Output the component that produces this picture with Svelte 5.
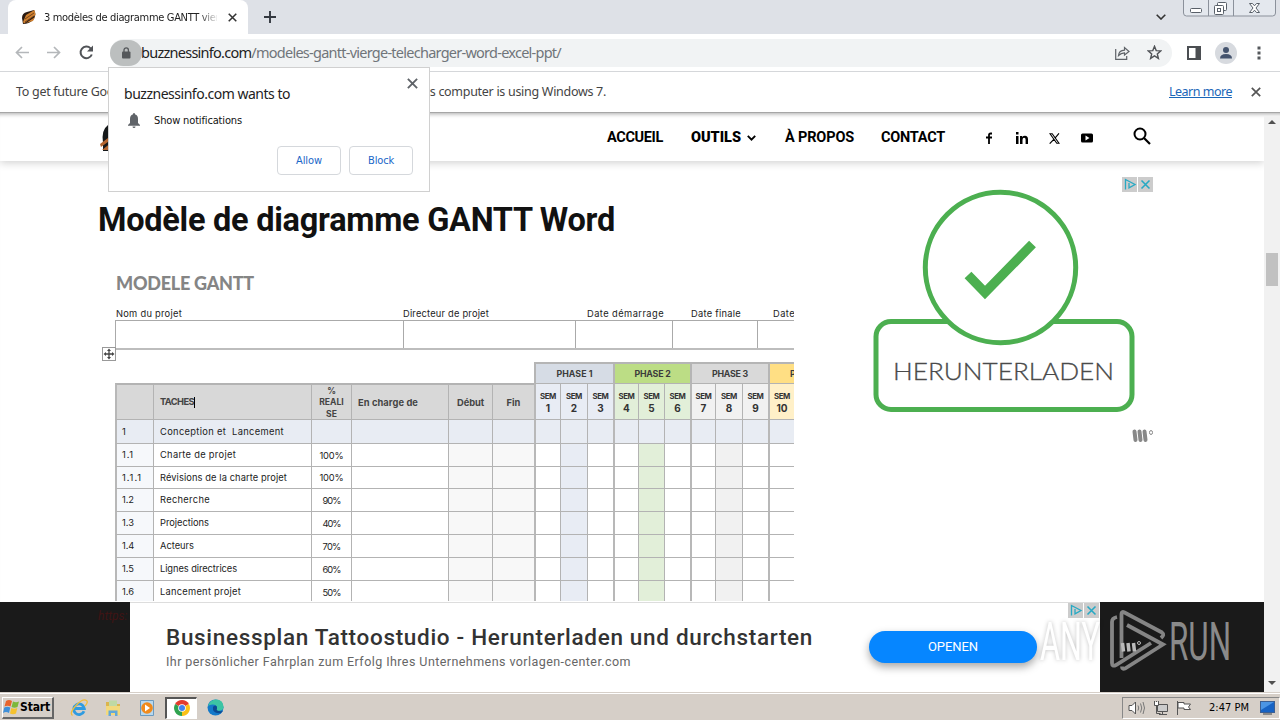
<script lang="ts">
  type Row = { id: string, task: string, done: string };

  const phases = [
    { name: 'PHASE 1', tone: 'blue', weeks: [1, 2, 3] },
    { name: 'PHASE 2', tone: 'green', weeks: [4, 5, 6] },
    { name: 'PHASE 3', tone: 'gray', weeks: [7, 8, 9] },
    { name: 'P', tone: 'yellow', weeks: [10] },
  ];

  const weeks = phases.flatMap((phase) => phase.weeks.map((n, i) => ({
    n,
    tone: phase.tone,
    first: i === 0,
    mid: i === 1,
  })));

  const rows: Row[] = [
    { id: '1.1', task: 'Charte de projet', done: '100%' },
    { id: '1.1.1', task: 'Révisions de la charte projet', done: '100%' },
    { id: '1.2', task: 'Recherche', done: '90%' },
    { id: '1.3', task: 'Projections', done: '40%' },
    { id: '1.4', task: 'Acteurs', done: '70%' },
    { id: '1.5', task: 'Lignes directrices', done: '60%' },
    { id: '1.6', task: 'Lancement projet', done: '50%' },
  ];

  const taskWidths = [76, 127, 50, 49, 34, 77, 81];

  // spreads the letters so that the text takes exactly the given width
  function fit(node: HTMLElement, width: number) {
    const length = node.textContent?.length ?? 1;
    const natural = node.getBoundingClientRect().width;
    node.style.letterSpacing = `${(width - natural) / length}px`;
  }
</script>

{#snippet adChoices()}
  <svg class="choices" width="31" height="15" viewBox="0 0 31 15">
    <path d="M0 0h15v15H0zM16 0h15v15H16z" fill="#ccc" />
    <path d="M3.500 12.500v-10l9.500 5-6 3.300V6" fill="none" stroke="#27a9c4" stroke-width="1.300" />
    <path d="M19.500 3.500l8 8m0-8l-8 8" stroke="#27a9c4" stroke-width="1.600" />
  </svg>
{/snippet}

{#snippet cross(size: number, color: string)}
  <svg width={size} height={size} viewBox="0 0 10 10">
    <path d="M.8.8l8.400 8.400M9.200.8L.8 9.200" stroke={color} stroke-width="1.700" />
  </svg>
{/snippet}

{#snippet leaf()}
  <svg width="16" height="16" viewBox="0 0 16 16">
    <path d="M1 9Q1 4 6 3L13 1Q16 6 12 11Q8 15 2 15Z" fill="#2a1a12" />
    <path d="M5 6L13.500 1 14.500 6 3 14.500 2 13zM5 14l9-6-2 4z" fill="#cf8030" />
    <path d="M4 10l9-6M4 13l9-6" stroke="#3a2010" stroke-width=".6" />
  </svg>
{/snippet}

<div class="screen">
  <div class="tabstrip">
    <div class="tab">
      {@render leaf()}
      <span class="tab-title"><span use:fit={181}>3 modèles de diagramme GANTT vierg</span></span>
      {@render cross(9, '#333')}
    </div>
    <svg class="plus" width="12" height="12" viewBox="0 0 12 12"><path d="M6 0v12M0 6h12" stroke="#333840" stroke-width="1.900" /></svg>
    <svg class="chevron" width="10" height="6" viewBox="0 0 10 6"><path d="M.7.7L5 5 9.300.7" fill="none" stroke="#333" stroke-width="1.600" /></svg>
    <svg class="window-buttons" width="94" height="17" viewBox="0 0 94 17">
      <path d="M.5 0v13q0 3 3 3h86q3 0 3-3V0M25.500 0v16M50.500 0v16" fill="#e4e8ee" stroke="#8b919b" />
      <rect x="7.500" y="8.500" width="11" height="4" rx="1" fill="#fff" stroke="#596069" />
      <rect x="34.500" y="2.500" width="9" height="8" rx="1" fill="#fff" stroke="#596069" />
      <rect x="31.500" y="5.500" width="9" height="9" rx="1" fill="#fff" stroke="#596069" />
      <rect x="34.500" y="8.500" width="3" height="3" fill="none" stroke="#596069" />
      <path d="M66.500 3.500h3l2 2.300 2-2.300h3l-3.500 4.500 3.500 4.500h-3l-2-2.300-2 2.300h-3l3.500-4.500z" fill="#fff" stroke="#596069" />
    </svg>
  </div>

  <div class="toolbar">
    <svg class="nav-icon" width="14" height="13" viewBox="0 0 14 13"><path d="M14 6.500H1.500M7 1L1.500 6.500 7 12" fill="none" stroke="#b4b7ba" stroke-width="1.700" /></svg>
    <svg class="nav-icon" width="14" height="13" viewBox="0 0 14 13"><path d="M0 6.500h12.500M7 1l5.500 5.500L7 12" fill="none" stroke="#b4b7ba" stroke-width="1.700" /></svg>
    <svg class="nav-icon" width="15" height="15" viewBox="0 0 15 15">
      <path d="M12.800 9.500A5.800 5.800 0 1 1 11.600 3.400L13 5" fill="none" stroke="#505357" stroke-width="2" />
      <path d="M14 .5v6H8z" fill="#505357" />
    </svg>
    <div class="address">
      <div class="lock">
        <svg width="10" height="12" viewBox="0 0 10 12">
          <rect x="1" y="4.500" width="8.500" height="7" rx="1" fill="#55585b" />
          <path d="M3 5V3a2.200 2.200 0 0 1 4.400 0v2" fill="none" stroke="#55585b" stroke-width="1.300" />
        </svg>
      </div>
      <span class="url" use:fit={420}>buzznessinfo.com<i>/modeles-gantt-vierge-telecharger-word-excel-ppt/</i></span>
      <svg class="share" width="15" height="14" viewBox="0 0 15 14">
        <path d="M.7 3v10.300h11V10" fill="none" stroke="#5f6368" stroke-width="1.200" />
        <path d="M3.500 9.500q.5-5 6-5.300V1.500L14 5.500 9.500 9V6.800q-3.500 0-6 2.700z" fill="none" stroke="#5f6368" stroke-width="1.200" />
      </svg>
      <svg width="15" height="15" viewBox="0 0 15 15"><path d="M7.500 1.300l1.700 4.300 4.600.3-3.500 3 1.100 4.500-3.900-2.500-3.900 2.500 1.100-4.500-3.500-3 4.600-.3z" fill="none" stroke="#505357" stroke-width="1.400" /></svg>
    </div>
    <svg width="14" height="14" viewBox="0 0 14 14"><path d="M1 1h12v12H1z" fill="none" stroke="#4b4e52" stroke-width="2" /><path d="M8.500 1H13v12H8.500z" fill="#4b4e52" /></svg>
    <svg class="avatar" width="22" height="22" viewBox="0 0 22 22">
      <circle cx="11" cy="11" r="11" fill="#d7dadf" />
      <circle cx="11" cy="8" r="3" fill="#45546e" />
      <path d="M5 16.500q0-4.500 6-4.500t6 4.500z" fill="#45546e" />
    </svg>
    <svg class="dots" width="4" height="14" viewBox="0 0 4 14"><path d="M.5.500h3v3h-3zM.5 5.500h3v3h-3zM.5 10.500h3v3h-3z" fill="#55585c" /></svg>
  </div>

  <div class="infobar">
    <span use:fit={590}>To get future Google Chrome updates, you'll need Windows 10 or later. This computer is using Windows 7.</span>
    <a href="#learn" use:fit={63}>Learn more</a>
    {@render cross(10, '#555')}
  </div>

  <div class="viewport">
    <div class="page">
      <header>
        <div class="brand">
          <svg width="24" height="28" viewBox="0 0 24 28"><path d="M3 19Q1 6 8 1l14 5-6 21H3z" fill="#15181a" /><path d="M0 20l12-9v4L1 23zM2 26l10-8v8z" fill="#b5652f" /></svg>
        </div>
        <nav>
          <span use:fit={56}>ACCUEIL</span>
          <span class="menu"><b use:fit={50}>OUTILS</b><svg width="9" height="6" viewBox="0 0 9 6"><path d="M.8.8l3.700 3.800L8.200.8" fill="none" stroke="#000" stroke-width="1.900" /></svg></span>
          <span class="about" use:fit={69}>À PROPOS</span>
          <span use:fit={64}>CONTACT</span>
        </nav>
        <div class="social">
          <svg width="8" height="12" viewBox="0 0 8 12"><path d="M7 1.500H5.500Q4 1.500 4 3V12M1 5.500h6" fill="none" stroke="#000" stroke-width="1.800" /></svg>
          <svg width="12" height="12" viewBox="0 0 12 12"><path d="M0 4h2.500v8H0zM0 0h2.500v2.500H0zM4 4h2.300v1.200Q7 3.800 9 3.800q3 0 3 3.500V12H9.600V7.800q0-2-1.500-2T6.500 8v4H4z" /></svg>
          <svg width="11" height="11" viewBox="0 0 11 11"><path d="M1 .7h2.200l6.800 9.600H7.800zM10 .3L6.200 4.800M4.800 6.300L.7 10.700" fill="none" stroke="#000" stroke-width="1.100" /></svg>
          <svg width="12" height="10" viewBox="0 0 12 10"><rect y="0.500" width="12" height="9" rx="1.500" /><path d="M4.500 2.500v5l4-2.500z" fill="#fff" /></svg>
        </div>
        <svg class="search" width="18" height="18" viewBox="0 0 18 18"><circle cx="7" cy="7" r="5.500" fill="none" stroke="#000" stroke-width="2" /><path d="M11 11l6 6" stroke="#000" stroke-width="2.200" /></svg>
      </header>

      <main>
        <article>
          <h2><span use:fit={517}>Modèle de diagramme GANTT Word</span></h2>
          <div class="sheet">
            <h3><span use:fit={138}>MODELE GANTT</span></h3>
            <div class="fields">
              <div class="field"><span use:fit={66}>Nom du projet</span></div>
              <div class="field"><span use:fit={86}>Directeur de projet</span></div>
              <div class="field pad"><span use:fit={77}>Date démarrage</span></div>
              <div class="field wide"><span use:fit={50}>Date finale</span></div>
              <div class="field last"><span use:fit={22}>Date</span></div>
            </div>
            <div class="handle">
              <svg width="14" height="14" viewBox="0 0 14 14">
                <rect x=".5" y=".5" width="13" height="13" fill="#fff" stroke="#999" />
                <path d="M7 3v8M3 7h8" stroke="#444" stroke-width="1.300" />
                <path d="M7 1.500l2 2.500H5zM7 12.500L5 10h4zM1.500 7L4 5v4zM12.500 7L10 9V5z" fill="#444" />
              </svg>
            </div>
            <div class="phases">
              {#each phases as phase}
                <div class="phase {phase.tone}">
                  {#if phase.name === 'P'}P{:else}<span use:fit={36}>{phase.name}</span>{/if}
                </div>
              {/each}
            </div>
            <div class="gantt">
              <div class="cell head edge"></div>
              <div class="cell head task"><span use:fit={34}>TACHES</span><span class="caret"></span></div>
              <div class="cell head done">%<br>REALI<br>SE</div>
              <div class="cell head owner"><span use:fit={60}>En charge de</span></div>
              <div class="cell head date"><span use:fit={27}>Début</span></div>
              <div class="cell head date">Fin</div>
              {#each weeks as week}
                <div class="cell week {week.tone}" class:edge={week.first}><small use:fit={16}>SEM</small>{week.n}</div>
              {/each}

              <div class="cell group edge id">1</div>
              <div class="cell group task"><span use:fit={124}>Conception et &nbsp;Lancement</span></div>
              {#each Array(4) as _}
                <div class="cell group"></div>
              {/each}
              {#each weeks as week}
                <div class="cell group" class:edge={week.first}></div>
              {/each}

              {#each rows as row, i}
                <div class="cell edge id"><span use:fit={row.id.length * 4}>{row.id}</span></div>
                <div class="cell task"><span use:fit={taskWidths[i]}>{row.task}</span></div>
                <div class="cell done"><span use:fit={row.done.length * 6}>{row.done}</span></div>
                <div class="cell"></div>
                <div class="cell dim"></div>
                <div class="cell dim"></div>
                {#each weeks as week}
                  <div class="cell {week.mid ? week.tone : ''}" class:edge={week.first}></div>
                {/each}
              {/each}
            </div>
          </div>
        </article>

        <aside>
          {@render adChoices()}
          <svg class="download" width="300" height="275" viewBox="860 175 300 275">
            <rect x="876" y="321.500" width="256" height="88" rx="15" fill="#fff" stroke="#4caf50" stroke-width="5" />
            <circle cx="1000.500" cy="267.500" r="75.200" fill="#fff" stroke="#4caf50" stroke-width="5" />
            <path d="M968 275l17 17.500 47.500-48.500" fill="none" stroke="#4caf50" stroke-width="9.500" />
            <text x="893" y="380" textLength="221" lengthAdjust="spacingAndGlyphs">HERUNTERLADEN</text>
            <path d="M1134.500 431.500l1 8.500M1139.500 431.500l1 8.500M1144.500 431.500l1 8.500" stroke="#888" stroke-width="4" stroke-linecap="round" />
            <ellipse cx="1151" cy="432.500" rx="1.500" ry="2" fill="none" stroke="#888" />
          </svg>
        </aside>
      </main>

      <div class="sticky">
        <span class="source">https:</span>
        <div class="banner">
          <div class="copy">
            <strong><span use:fit={647}>Businessplan Tattoostudio - Herunterladen und durchstarten</span></strong>
            <p><span use:fit={465}>Ihr persönlicher Fahrplan zum Erfolg Ihres Unternehmens vorlagen-center.com</span></p>
          </div>
          <div class="open"><span use:fit={50}>OPENEN</span></div>
          {@render adChoices()}
        </div>
      </div>
    </div>

    <div class="scrollbar">
      <svg width="8" height="4" viewBox="0 0 8 4"><path d="M4 0l4 4H0z" fill="#505050" /></svg>
      <div class="thumb"></div>
      <svg class="down" width="8" height="4" viewBox="0 0 8 4"><path d="M4 4L0 0h8z" fill="#505050" /></svg>
    </div>
  </div>

  <div class="taskbar">
    <div class="start">
      <svg width="17" height="16" viewBox="0 0 17 16">
        <path d="M3 2q3-2 6 0L7.500 7.500q-3-1.500-6 0z" fill="#e8642c" />
        <path d="M10 2.500q3 1.500 6 0L14.500 8q-3 1.500-6 0z" fill="#7db83c" />
        <path d="M1.300 8.500q3-1.500 6 0L6 14q-3-2-6 0z" fill="#3f8fd8" />
        <path d="M8.300 9q3 1.500 6 0L13 14.500q-3 1.500-6 0z" fill="#f5c22f" />
      </svg>
      <span use:fit={30}>Start</span>
    </div>
    <div class="app">
      <svg width="18" height="18" viewBox="0 0 18 18">
        <path d="M14 12.200A5.300 5.300 0 1 1 14.300 9.500H5" fill="none" stroke="#2f9be0" stroke-width="2.800" />
        <path d="M2.500 16.500Q-1 14 6 6.500T16.500 1.500Q18.500 3 15 7" fill="none" stroke="#f0bd3a" stroke-width="1.300" />
      </svg>
    </div>
    <div class="app">
      <svg width="18" height="18" viewBox="0 0 18 18">
        <path d="M2 3h5l1 2h8v11H2z" fill="#dbb54e" />
        <path d="M5 1.500h8V8H5z" fill="#bfd9a4" />
        <path d="M2 7h14v9H2z" fill="#f3d97c" />
        <path d="M4.500 17v-5.500h9V17h-2.500v-3H7v3z" fill="#62a8d8" />
      </svg>
    </div>
    <div class="app">
      <svg width="18" height="18" viewBox="0 0 18 18">
        <path d="M2.500 1.500h13v15h-13z" fill="#b8d8ee" stroke="#6a9ac0" />
        <circle cx="9" cy="9" r="5.800" fill="#f08a1c" />
        <path d="M7 5.500v7l5-3.500z" fill="#fff" />
      </svg>
    </div>
    <div class="app active">
      <svg width="16" height="16" viewBox="0 0 16 16">
        <path d="M8 8L1.100 4A8 8 0 0 1 14.900 4z" fill="#e33b2e" />
        <path d="M8 8l6.900-4A8 8 0 0 1 8 16z" fill="#fbc116" />
        <path d="M8 8v8A8 8 0 0 1 1.100 4z" fill="#30a350" />
        <circle cx="8" cy="8" r="3.800" fill="#fff" />
        <circle cx="8" cy="8" r="3" fill="#4182ee" />
      </svg>
    </div>
    <div class="app">
      <svg width="17" height="17" viewBox="0 0 17 17">
        <circle cx="8.500" cy="8.500" r="8" fill="#1479c9" />
        <path d="M1 7Q3 .5 9 .5q7 0 7.500 7 0 4-4.500 4-3 0-2-2 0-4-4.500-4Q2.500 5.500 1 7z" fill="#3cc5a4" />
        <path d="M6 8q-1 7 8 6l2-2q-7 1-6-3 .5-2-1.500-2.500Q6.500 6.500 6 8z" fill="#0c4a92" />
        <path d="M10 9.500q1-2-.5-3.500l7 2q-.5 3.500-4.500 3.500-3 0-2-2z" fill="#3cc5a4" />
      </svg>
    </div>
    <div class="tray">
      <svg width="18" height="16" viewBox="0 0 18 16"><path d="M1 5.500h3L7.500 2v12L4 10.500H1z" fill="#fff" stroke="#555" /><path d="M10 5.500q1.500 2.500 0 5M12.500 3.500q2.500 4.500 0 9M15 2q3 6 0 12" fill="none" stroke="#777" /></svg>
      <svg width="16" height="16" viewBox="0 0 16 16"><path d="M4.500 4.500h10v7h-10z" fill="#ccc" stroke="#555" /><path d="M6 14.500h8M9.500 12v2" stroke="#555" /><path d="M1.500 1v4.500h4V1M3.500 1v12.500h4" fill="none" stroke="#555" /><path d="M2 2h3v3H2z" fill="#fff" /></svg>
      <svg width="16" height="16" viewBox="0 0 16 16"><path d="M1.500 1v14M2 2.500h6v1.500h6.500l-2 3 2 2.500H8V8H2z" fill="#fff" stroke="#555" /></svg>
      <span class="clock" use:fit={40}>2:47 PM</span>
      <svg class="desktop" width="15" height="14" viewBox="0 0 15 14"><rect x=".5" y=".5" width="14" height="11" fill="#1763c4" stroke="#3b5f93" /><path d="M1 1h13L1 9z" fill="#4b95e4" /><path d="M3 13h9" stroke="#888" stroke-width="2" /></svg>
    </div>
  </div>

  <div class="popup">
    <div class="popup-close">{@render cross(11, '#5f6368')}</div>
    <div class="popup-title"><span use:fit={166}>buzznessinfo.com wants to</span></div>
    <div class="permission">
      <svg width="12" height="15" viewBox="0 0 12 15"><path d="M6 0q1.200 0 1.200 1.500Q10 2.300 10 6v4l2 2v.8H0V12l2-2V6q0-3.700 2.800-4.500Q4.800 0 6 0zM4.500 13.500h3q0 1.500-1.500 1.500t-1.500-1.500z" fill="#5f6368" /></svg>
      <span use:fit={88}>Show notifications</span>
    </div>
    <div class="actions">
      <button><span use:fit={26}>Allow</span></button>
      <button><span use:fit={26}>Block</span></button>
    </div>
  </div>

  <svg class="watermark" width="200" height="70" viewBox="1036 605 200 70">
    <g class="word">
      <text x="1040" y="660" textLength="60" lengthAdjust="spacingAndGlyphs" class="ghost">ANY</text>
      <text x="1169" y="660" textLength="62" lengthAdjust="spacingAndGlyphs" fill="#8a8a8a">RUN</text>
    </g>
    <g fill="none" stroke="#858585" stroke-width="3.800">
      <path d="M1121.500 658V614q0-3 3-1.500l37.500 20q3 2-1 5.500" />
      <path d="M1127 625l36 19.500-38 24q-3 1-3-2" />
      <path d="M1117 617q-5 1-5 5v41q0 4 4 2l35-22" />
    </g>
    <path d="M1122.500 643l1 8.500M1128 643l1 8.500M1133.500 643l1 8.500" stroke="#bbb" stroke-width="3.500" />
    <circle cx="1139" cy="643" r="1.500" fill="none" stroke="#bbb" />
  </svg>
</div>

<style>
  :global(body) {
    overflow: hidden;
    margin:   0;
  }

  .screen {
    position:       relative;
    display:        flex;
    flex-direction: column;
    width:          1280px;
    height:         720px;
    overflow:       hidden;
    background:     #fff;
    font-family:    "DejaVu Sans Condensed", "DejaVu Sans", sans-serif;
    font-size:      11px;
    color:          #222;
  }

  .screen * {
    box-sizing: border-box;
  }

  svg {
    display:     block;
    flex-shrink: 0;
  }

  span {
    white-space: nowrap;
  }

  .tabstrip {
    display:     flex;
    align-items: center;
    height:      34px;
    background:  #dee1e7;
  }

  .tab {
    display:       flex;
    align-items:   center;
    width:         240px;
    height:        34px;
    margin-left:   8px;
    padding-left:  13px;
    border-radius: 8px 8px 0 0;
    background:    #fff;
  }

  .tab-title {
    width:        173px;
    margin:       0 11px 0 7px;
    overflow:     hidden;
    font-size:    11px;
    mask-image:   linear-gradient(90deg, #000 155px, transparent 175px);
  }

  .plus {
    margin-left: 16px;
  }

  .chevron {
    margin-left: 880px;
  }

  .window-buttons {
    align-self:  flex-start;
    margin-left: 17px;
  }

  .toolbar {
    display:       flex;
    align-items:   center;
    height:        38px;
    padding-left:  15px;
    border-bottom: 1px solid #d5d7da;
  }

  .nav-icon {
    margin-right: 18px;
  }

  .address {
    display:       flex;
    align-items:   center;
    width:         1062px;
    height:        28px;
    margin:        0 15px 0 -2px;
    border-radius: 14px;
    background:    #f1f3f4;
  }

  .lock {
    display:         flex;
    align-items:     center;
    justify-content: center;
    width:           32px;
    height:          26px;
    border-radius:   13px;
    background:      #bcbfbf;
  }

  .url {
    margin: 0 0 2px -1px;
    font:   14.5px/20px "Noto Sans", sans-serif;
    color:  #222;
  }

  .url i {
    font-style: normal;
    color:      #70757a;
  }

  .share {
    margin: 0 17px 0 auto;
  }

  .share + svg {
    margin-right: 10px;
  }

  .avatar {
    margin-left: 14px;
  }

  .dots {
    margin-left: 20px;
  }

  .infobar {
    display:       flex;
    align-items:   center;
    height:        40px;
    padding:       0 0 1px 16px;
    font:          12.5px "Noto Sans", sans-serif;
    color:         #444;
  }

  .infobar a {
    margin: 0 19px 0 auto;
    color:  #1a66b8;
  }

  .infobar > :global(svg) {
    margin-right: 19px;
  }

  .viewport {
    display:    flex;
    height:     580px;
    border-top: 1px solid #a6a6a6;
    box-shadow: inset 0 5px 4px -4px #aaa;
  }

  .page {
    position: relative;
    width:    1264px;
    overflow: hidden;
  }

  header {
    display:      flex;
    align-items:  center;
    height:       48px;
    padding-left: 100px;
    box-shadow:   0 2px 8px rgba(0, 0, 0, 0.18);
  }

  .brand {
    width:       507px;
    padding-top: 2px;
  }

  nav {
    display:     flex;
    gap:         28px;
    width:       377px;
    padding-top: 1px;
    font:        bold 14.5px Roboto, sans-serif;
    color:       #000;
  }

  .menu {
    display:     flex;
    align-items: center;
    gap:         6px;
  }

  .about {
    margin-left: 1px;
    margin-right: -1px;
  }

  .social {
    display:     flex;
    align-items: center;
    gap:         21px;
    width:       149px;
    padding-top: 2px;
  }

  .social svg:first-child {
    margin: 0 2px 0 1px;
  }

  .search {
    margin-top: -3px;
  }

  main {
    display: flex;
  }

  article {
    width:        794px;
    padding-left: 98px;
  }

  h2 {
    height:      70px;
    margin:      40px 0 0;
    font:        bold 32.5px/39px Roboto, sans-serif;
    color:       #111;
  }

  .sheet {
    width:        696px;
    height:       330px;
    padding-left: 17px;
    overflow:     hidden;
    font:         9.3px/12px Inter, sans-serif;
  }

  .sheet h3 {
    height:  36px;
    margin:  0 0 0 1px;
    font:    900 18px/25px Lato, sans-serif;
    color:   #858585;
  }

  .fields {
    display:               grid;
    grid-template-columns: 288px 172px 97px 85px 60px;
    height:                43px;
    border-bottom:         2px solid #bdbdbd;
  }

  .field {
    display:        flex;
    flex-direction: column;
    align-items:    flex-start;
    line-height:    13px;
  }

  .field::after {
    content:      "";
    width:        100%;
    flex:         1;
    border-top:   1px solid #aaa;
    border-left:  1px solid #aaa;
  }

  .field:first-child span {
    margin-left: 1px;
  }

  .pad span {
    margin-left: 12px;
  }

  .wide span {
    margin-left: 19px;
  }

  .last span {
    margin-left: 16px;
  }

  .handle {
    height:      13px;
    margin-left: -13px;
    margin-top:  -3px;
  }

  .phases {
    display:               grid;
    grid-template-columns: 79px 77px 78px 78px;
    height:                21px;
    margin-left:           419px;
    margin-top:            2px;
  }

  .phase {
    padding:      4px 0 0;
    border-top:   2px solid #b5b5b5;
    border-left:  2px solid #b5b5b5;
    font-size:    8.8px;
    font-weight:  700;
    text-align:   center;
    color:        #3c3c3c;
  }

  .phase.blue { background: #d6dce5; }
  .phase.green { background: #bcdd85; }
  .phase.gray { background: #d9d9d9; }
  .phase.yellow { padding-left: 20px; background: #ffdf84; text-align: left; }

  .gantt {
    display:               grid;
    grid-template-columns: 38px 158px 40px 97px 44px 42px 26px 27px 26px 25px 26px 26px 25px 27px 26px 26px;
    grid-template-rows:    36px 24px 23px 22px 23px 23px 23px 23px 23px;
  }

  .cell {
    display:     flex;
    align-items: center;
    border-top:  1px solid #b3b3b3;
    border-left: 1px solid #b3b3b3;
  }

  .edge {
    border-left-width: 2px;
    border-left-color: #b8b8b8;
  }

  .head {
    border-top:  2px solid #b3b3b3;
    background:  #d8d8d8;
    font-weight: 700;
    color:       #444;
  }

  .id {
    padding-left: 5px;
    background:   #f6f8fb;
  }

  .task {
    padding-left: 6px;
  }

  .caret {
    width:      1px;
    height:     11px;
    background: #000;
  }

  .done {
    justify-content: center;
    padding-top:     1px;
    text-align:      center;
  }

  .head.done {
    display:     block;
    padding-top: 1px;
    font-size:   8.6px;
    line-height: 11.3px;
  }

  .head.owner,
  .head.date {
    padding-top: 2px;
  }

  .owner {
    padding-left: 6px;
  }

  .date {
    justify-content: center;
  }

  .week {
    flex-direction: column;
    padding-top:    6px;
    font-size:      10px;
    font-weight:    700;
    color:          #333;
  }

  .week small {
    font-size: 7.8px;
  }

  .cell.group { background: #e8ecf3; }
  .cell.dim { background: #f8f8f8; }
  .cell.blue { background: #e8ecf4; }
  .cell.green { background: #e2efd9; }
  .cell.gray { background: #f1f1f1; }
  .cell.yellow { background: #fff0c8; }

  aside {
    width:       300px;
    margin-left: 63px;
    padding-top: 16px;
  }

  aside :global(.choices) {
    margin-left: 265px;
  }

  .download {
    margin: -17px 0 0 3px;
  }

  .download text {
    font:         300 23.5px Lato, sans-serif;
    fill:         #4a4a4a;
    stroke:       #4a4a4a;
    stroke-width: 0.3px;
  }

  .sticky {
    position:     absolute;
    top:          489px;
    left:         0;
    display:      flex;
    width:        1264px;
    height:       90px;
    padding-left: 98px;
    background:   #1a1a1a;
  }

  .source {
    width:       32px;
    padding-top: 7px;
    font:        italic 12px Roboto, sans-serif;
    color:       #401414;
  }

  .banner {
    display:      flex;
    align-items:  flex-start;
    width:        970px;
    border-top:   1px solid #ddd;
    padding-left: 36px;
    background:   #fff;
  }

  .copy {
    width:       703px;
    padding-top: 20px;
  }

  .copy strong {
    display: block;
    font:    500 22.5px/28px Roboto, sans-serif;
    color:   #333;
  }

  .copy p {
    margin: 2px 0 0;
    font:   12.5px/18px Roboto, sans-serif;
    color:  #666;
  }

  .open {
    width:         168px;
    height:        32px;
    margin:        28px 31px 0 0;
    border-radius: 16px;
    background:    #0686ff;
    box-shadow:    0 4px 8px rgba(0, 0, 0, 0.35);
    font:          13px/32px Roboto, sans-serif;
    text-align:    center;
    color:         #fff;
  }

  .scrollbar {
    display:        flex;
    flex-direction: column;
    align-items:    center;
    width:          16px;
    margin-top:     3px;
    padding:        4px 0 7px;
    background:     #f1f1f1;
  }

  .thumb {
    width:      12px;
    height:     33px;
    margin-top: 129px;
    background: #c1c1c1;
  }

  .down {
    margin-top: auto;
  }

  .taskbar {
    display:     flex;
    align-items: center;
    height:      28px;
    padding:     2px 0 0 2px;
    border-top:  1px solid #d6cfc8;
    box-shadow:  inset 0 1px #fff;
    background:  #d6cfc8;
  }

  .start {
    display:      flex;
    align-items:  center;
    width:        52px;
    height:       22px;
    margin-right: 9px;
    border:       1px solid #fff;
    border-right: 2px solid #666;
    border-bottom: 2px solid #666;
    font-size:    12px;
    font-weight:  bold;
    color:        #000;
  }

  .app {
    display:         flex;
    align-items:     center;
    justify-content: center;
    width:           32px;
    height:          22px;
    margin-left:     2px;
  }

  .start + .app {
    margin-left: 0;
  }

  .app.active {
    border:       1px solid #fff;
    border-left:  2px solid #555;
    border-top:   2px solid #555;
    background:   #fff;
  }

  .tray {
    display:      flex;
    align-items:  center;
    width:        158px;
    height:       22px;
    margin-left:  auto;
    padding-left: 5px;
    border:       1px solid #fff;
    border-left:  1px solid #888;
    border-top:   1px solid #888;
    gap:          8px;
    color:        #000;
  }

  .tray svg:nth-child(2) {
    margin: 0 -1px;
  }

  .clock {
    margin-left: 9px;
  }

  .desktop {
    margin-left: 3px;
  }

  .popup {
    position:   absolute;
    top:        67px;
    left:       108px;
    width:      322px;
    height:     125px;
    padding:    16px 16px 0 15px;
    border:     1px solid #d0d0d0;
    background: #fff;
  }

  .popup-close {
    position: absolute;
    top:      10px;
    right:    11px;
  }

  .popup-title {
    font:  14px/20px "Noto Sans", sans-serif;
    color: #222;
  }

  .permission {
    display:     flex;
    align-items: center;
    gap:         14px;
    height:      16px;
    margin-top:  8px;
    padding-left: 4px;
    color:       #111;
  }

  .actions {
    display:         flex;
    justify-content: flex-end;
    gap:             8px;
    margin-top:      18px;
  }

  button {
    width:         64px;
    height:        29px;
    padding:       0;
    border:        1px solid #d5d8dc;
    border-radius: 4px;
    background:    #fff;
    font:          inherit;
    color:         #1a66c8;
  }

  .watermark {
    position: absolute;
    top:      605px;
    left:     1036px;
  }

  .word text {
    font: 53px Roboto, sans-serif;
  }

  .ghost {
    fill:   #fff;
    filter: drop-shadow(0 0 2px rgba(0, 0, 0, 0.25));
  }
</style>
